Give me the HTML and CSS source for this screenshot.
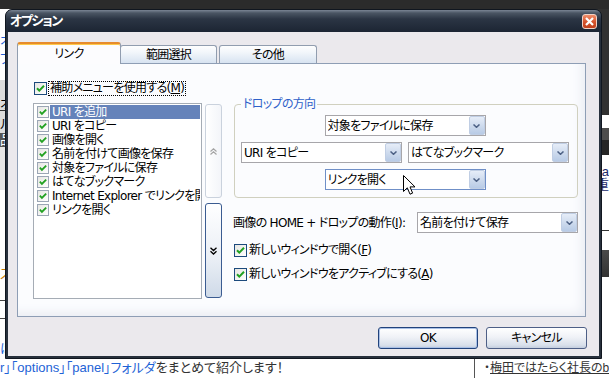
FILE: index.html
```html
<!DOCTYPE html>
<html>

<head>
    <meta charset="utf-8">
    <title>オプション</title>
    <link rel="stylesheet" href="styles.css">
</head>

<body>
    <svg width="0" height="0" class="defs">
        <symbol id="chk" viewBox="0 0 11 11">
            <polyline points="2,5.2 4.3,7.6 9,2.8" fill="none" stroke="#21a121" stroke-width="2"/>
        </symbol>
        <symbol id="drop" viewBox="0 0 7 4">
            <polyline points="0.5,0.5 3.5,3.3 6.5,0.5" fill="none" stroke="#4d6185" stroke-width="1.5"/>
        </symbol>
    </svg>

    <!-- page behind the dialog -->
    <div class="page">
        <div class="page-top"></div>
        <div class="page-body">
            <div class="page-main">
                <p class="m-link">オプションダイアログ</p>
                <p class="m-link">フォルダ構成</p>
                <div class="m-box">
                    <p class="m-text">オ</p>
                    <p class="m-text m-rule">ル</p>
                    <p class="m-dark">品</p>
                </div>
                <div class="m-pale"></div>
                <p class="m-note">ス</p>
                <div class="m-lines"></div>
                <p class="m-link m-low">はてな</p>
                <p class="lead"><span class="lead-hl">r」「options」「panel」フォルダ</span>をまとめて紹介します！</p>
            </div>
            <div class="page-side">
                <div class="s-dark"></div>
                <div class="s-gap"></div>
                <div class="s-head"></div>
                <div class="s-head2"></div>
                <div class="s-text">
                    <p>Hatena data</p>
                    <p>ブックマーク重</p>
                </div>
                <div class="s-gap2"></div>
                <div class="s-band"></div>
                <p class="s-link">・<u>梅田ではたらく社長のblog</u></p>
            </div>
        </div>
    </div>

    <!-- the dialog -->
    <div class="dialog">
        <div class="titlebar">
            <span class="title">オプション</span>
            <span class="close">
                <svg width="9" height="9" viewBox="0 0 9 9">
                    <path d="M1 1 L8 8 M8 1 L1 8" stroke="#fff" stroke-width="2.2"/>
                </svg>
            </span>
        </div>

        <div class="dlg-body">
            <div class="tabs">
                <div class="tab tab-on">リンク</div>
                <div class="tab tab-2">範囲選択</div>
                <div class="tab tab-3">その他</div>
            </div>

            <div class="panel">
                <div class="main-check">
                    <span class="box"><svg><use href="#chk"/></svg></span>
                    <span class="focus">補助メニューを使用する(<u>M</u>)</span>
                </div>

                <div class="cols">
                    <ul class="list">
                        <li class="item item-on"><span class="box box-s"><svg><use href="#chk"/></svg></span><span class="label">URI を追加</span></li>
                        <li class="item"><span class="box box-s"><svg><use href="#chk"/></svg></span><span class="label">URI をコピー</span></li>
                        <li class="item"><span class="box box-s"><svg><use href="#chk"/></svg></span><span class="label">画像を開く</span></li>
                        <li class="item"><span class="box box-s"><svg><use href="#chk"/></svg></span><span class="label">名前を付けて画像を保存</span></li>
                        <li class="item"><span class="box box-s"><svg><use href="#chk"/></svg></span><span class="label">対象をファイルに保存</span></li>
                        <li class="item"><span class="box box-s"><svg><use href="#chk"/></svg></span><span class="label">はてなブックマーク</span></li>
                        <li class="item"><span class="box box-s"><svg><use href="#chk"/></svg></span><span class="label">Internet Explorer でリンクを開く</span></li>
                        <li class="item"><span class="box box-s"><svg><use href="#chk"/></svg></span><span class="label">リンクを開く</span></li>
                    </ul>

                    <div class="scroll">
                        <div class="scroll-up">
                            <svg width="7" height="7" viewBox="0 0 7 7">
                                <path d="M0.5 3.5 L3.5 0.8 L6.5 3.5 M0.5 6.5 L3.5 3.8 L6.5 6.5" fill="none" stroke="#a4a4a4" stroke-width="1.2"/>
                            </svg>
                        </div>
                        <div class="scroll-down">
                            <svg width="7" height="8" viewBox="0 0 7 8">
                                <path d="M0.5 0.8 L3.5 3.6 L6.5 0.8 M0.5 4.3 L3.5 7.1 L6.5 4.3" fill="none" stroke="#000" stroke-width="1.3"/>
                            </svg>
                        </div>
                    </div>

                    <div class="side-col">
                        <fieldset class="group">
                            <legend>ドロップの方向</legend>
                            <div class="combo-row">
                                <div class="combo"><span class="combo-text">対象をファイルに保存</span><span class="combo-btn"><svg width="7" height="4"><use href="#drop"/></svg></span></div>
                            </div>
                            <div class="combo-row combo-split">
                                <div class="combo"><span class="combo-text">URI をコピー</span><span class="combo-btn"><svg width="7" height="4"><use href="#drop"/></svg></span></div>
                                <div class="combo"><span class="combo-text">はてなブックマーク</span><span class="combo-btn"><svg width="7" height="4"><use href="#drop"/></svg></span></div>
                            </div>
                            <div class="combo-row">
                                <div class="combo combo-hot"><span class="combo-text">リンクを開く</span><span class="combo-btn"><svg width="7" height="4"><use href="#drop"/></svg></span></div>
                            </div>
                        </fieldset>

                        <div class="action">
                            <span class="action-label">画像の HOME + ドロップの動作(<u>I</u>):</span>
                            <div class="combo"><span class="combo-text">名前を付けて保存</span><span class="combo-btn"><svg width="7" height="4"><use href="#drop"/></svg></span></div>
                        </div>

                        <div class="opt">
                            <span class="box"><svg><use href="#chk"/></svg></span>
                            <span class="opt-text">新しいウィンドウで開く(<u>F</u>)</span>
                        </div>
                        <div class="opt">
                            <span class="box"><svg><use href="#chk"/></svg></span>
                            <span class="opt-text">新しいウィンドウをアクティブにする(<u>A</u>)</span>
                        </div>
                    </div>
                </div>
            </div>

            <div class="actions">
                <button class="btn btn-default">OK</button>
                <button class="btn btn-cancel">キャンセル</button>
            </div>
        </div>
    </div>

    <svg class="cursor" width="13" height="21" viewBox="0 0 13 21">
        <path d="M0.5 0.5 L0.5 16.5 L4.3 12.8 L7 19.2 L9.6 18.1 L7 11.9 L12 11.9 Z" fill="#fff" stroke="#000" stroke-width="1"/>
    </svg>
</body>

</html>
```

FILE: styles.css
```css
* {
    box-sizing: border-box;
}

html, body {
    margin: 0;
    padding: 0;
}

body {
    position: relative;
    width: 609px;
    height: 378px;
    overflow: hidden;
    background: #fff;
    color: #000;
    font-family: "DejaVu Sans", "Noto Sans CJK JP", sans-serif;
    font-size: 12px;
    line-height: 14px;
    letter-spacing: -0.7px;
    font-feature-settings: "palt";
}

p {
    margin: 0;
}

.defs {
    position: absolute;
}

/* ---- background page ---- */

.page {
    display: flex;
    flex-direction: column;
    height: 378px;
    font-family: "Liberation Sans", "Noto Sans CJK JP", sans-serif;
    letter-spacing: 0;
}

.page-top {
    flex: none;
    height: 9px;
    background: #2b2b2b;
}

.page-body {
    flex: 1;
    display: flex;
    min-height: 0;
}

.page-main {
    width: 475px;
    display: flex;
    flex-direction: column;
    padding-top: 23px;
    border-right: 1px solid #555;
    font-size: 13px;
    white-space: nowrap;
    overflow: hidden;
}

.m-link {
    color: #1e5fd4;
    line-height: 18px;
}

.m-box {
    margin-top: 12px;
    height: 67px;
    padding-top: 17px;
    background: #dcdcdc;
}

.m-text {
    line-height: 13px;
}

.m-rule {
    border-top: 1px solid #333;
    padding-top: 6px;
}

.m-dark {
    margin-top: 3px;
    height: 14px;
    background: #555;
    color: #fff;
    line-height: 14px;
}

.m-pale {
    height: 43px;
    background: #e6e6e6;
}

.m-note {
    margin-top: 77px;
    color: #c77a00;
    line-height: 14px;
}

.m-lines {
    margin-top: 19px;
    height: 19px;
    border-top: 1px solid #444;
    border-bottom: 1px solid #444;
}

.m-low {
    margin-top: 21px;
}

.lead {
    margin-top: auto;
    line-height: 20px;
    color: #333;
}

.lead-hl {
    color: #1e63d6;
}

.page-side {
    flex: 1;
    display: flex;
    flex-direction: column;
    white-space: nowrap;
    overflow: hidden;
}

.s-dark {
    height: 106px;
    background: #313131;
}

.s-gap {
    height: 13px;
}

.s-head {
    height: 12px;
    background: #4d4d4d;
}

.s-head2 {
    height: 15px;
    background: #262626;
}

.s-text {
    height: 76px;
    padding-top: 10px;
    border-bottom: 1px solid #333;
    color: #1a2a6a;
    text-align: right;
    font-size: 13px;
    line-height: 13px;
}

.s-gap2 {
    height: 19px;
}

.s-band {
    height: 27px;
    background: linear-gradient(#4a4a4a, #333);
}

.s-link {
    margin-top: auto;
    padding-left: 9px;
    line-height: 20px;
    font-size: 12px;
    color: #333;
}

/* ---- dialog ---- */

.dialog {
    position: absolute;
    left: 5px;
    top: 9px;
    width: 597px;
    height: 350px;
    display: flex;
    flex-direction: column;
    padding: 0 2px 2px;
    background: #27303c;
    border: 1px solid #10161f;
    border-radius: 7px 7px 0 0;
}

.titlebar {
    flex: none;
    height: 22px;
    margin: 0 -2px;
    padding: 0 4px;
    display: flex;
    align-items: center;
    justify-content: space-between;
    background: linear-gradient(#7a8594, #4a5563 3px, #2b3544 9px, #1c2533);
    border-radius: 6px 6px 0 0;
}

.title {
    color: #fff;
    font-size: 13px;
    font-weight: bold;
    letter-spacing: -1.4px;
}

.close {
    width: 15px;
    height: 15px;
    display: flex;
    align-items: center;
    justify-content: center;
    border: 1px solid #f1d2c6;
    border-radius: 3px;
    background: linear-gradient(#f08f6c, #d6522b 55%, #c1401c);
}

.dlg-body {
    flex: 1;
    display: flex;
    flex-direction: column;
    padding: 10px 12px 7px 9px;
    background: #ebe9ed;
}

/* tabs */

.tabs {
    flex: none;
    height: 21px;
    display: flex;
    align-items: flex-end;
}

.tab {
    height: 18px;
    display: flex;
    align-items: center;
    justify-content: center;
    border: 1px solid #919daf;
    border-bottom: 0;
    border-radius: 3px 3px 0 0;
    background: linear-gradient(#fefefe, #f1f5fa 40%, #d7e3f1);
}

.tab-on {
    position: relative;
    z-index: 1;
    width: 104px;
    height: 22px;
    margin-bottom: -1px;
    border-top: 2px solid #e68b2c;
    box-shadow: inset 0 1px #ffc94a;
    background: #fcfcfe;
}

.tab-2 {
    width: 97px;
    margin-left: -1px;
}

.tab-3 {
    width: 98px;
    margin-left: 2px;
}

.panel {
    flex: none;
    height: 254px;
    margin-right: 1px;
    padding: 16px 8px 0 16px;
    border: 1px solid #8e9eb5;
    background: #fbfcfe;
    box-shadow: inset -10px -10px 12px -8px #e6e9f1;
}

/* checkboxes */

.box {
    flex: none;
    width: 13px;
    height: 13px;
    display: flex;
    border: 1px solid #1c4a7c;
    background: linear-gradient(135deg, #e6e6e2, #fff);
}

.box svg {
    width: 11px;
    height: 11px;
}

.box-s {
    width: 12px;
    height: 12px;
    border-color: #9ba6b5;
}

.box-s svg {
    width: 10px;
    height: 10px;
}

.main-check {
    height: 17px;
    display: flex;
    align-items: center;
}

.focus {
    margin-left: 1px;
    padding: 0 1px;
    border: 1px dotted #000;
    line-height: 13px;
}

.cols {
    display: flex;
    align-items: flex-start;
    margin-top: 6px;
}

/* list */

.list {
    flex: none;
    width: 169px;
    height: 196px;
    margin: 0 0 0 -1px;
    padding: 1px 1px 0 3px;
    list-style: none;
    border: 1px solid #a5acb5;
    background: #fff;
}

.item {
    height: 14px;
    display: flex;
    align-items: center;
}

.label {
    flex: 1;
    height: 14px;
    margin-left: 1px;
    padding: 0 2px;
    white-space: nowrap;
    overflow: hidden;
}

.item-on .label {
    background: #6583ba;
    color: #fff;
}

.scroll {
    flex: none;
    width: 17px;
    margin-left: 3px;
    display: flex;
    flex-direction: column;
}

.scroll-up,
.scroll-down {
    display: flex;
    align-items: center;
    justify-content: center;
    border-radius: 3px;
}

.scroll-up {
    height: 94px;
    margin-top: 1px;
    border: 1px solid #cad2dd;
    background: linear-gradient(to right, #fff, #f3f5f9);
}

.scroll-down {
    height: 95px;
    margin-top: 5px;
    border: 1px solid #3b5c91;
    background: linear-gradient(#ffffff, #e9eef5 60%, #cfdae8);
}

/* right column */

.side-col {
    flex: none;
    width: 344px;
    margin: -6px 0 0 12px;
}

.group {
    margin: 0;
    min-width: 0;
    padding: 4px 8px 7px 6px;
    border: 1px solid #d0d0bf;
    border-radius: 4px;
}

.group legend {
    padding: 0 2px;
    color: #2f61c9;
    line-height: 14px;
}

.combo-row {
    display: flex;
    justify-content: center;
}

.combo-row + .combo-row {
    margin-top: 6px;
}

.combo-split {
    justify-content: space-between;
}

.combo {
    flex: none;
    width: 161px;
    height: 21px;
    display: flex;
    align-items: center;
    padding-left: 2px;
    border: 1px solid #a7a6aa;
    background: #fff;
}

.combo-hot {
    border-color: #6f8fc7;
}

.combo-text {
    flex: 1;
    white-space: nowrap;
    overflow: hidden;
}

.combo-btn {
    flex: none;
    width: 16px;
    height: 19px;
    display: flex;
    align-items: center;
    justify-content: center;
    border: 1px solid #c0cee4;
    border-radius: 2px;
    background: linear-gradient(#e6edf8, #cad8ec 60%, #b8cbe6);
}

.action {
    height: 21px;
    margin-top: 14px;
    display: flex;
    align-items: center;
    justify-content: space-between;
}

.action-label {
    margin-left: -1px;
}

.opt {
    height: 14px;
    margin-top: 10px;
    display: flex;
    align-items: center;
}

.opt-text {
    margin-left: 2px;
}

/* buttons */

.actions {
    display: flex;
    justify-content: flex-end;
    gap: 8px;
    margin-top: 10px;
}

.btn {
    height: 22px;
    padding: 0;
    border-radius: 3px;
    font: inherit;
    letter-spacing: inherit;
    color: #000;
    background: linear-gradient(#ffffff, #f0f2f7 45%, #d9e0eb 85%, #c4cede);
}

.btn-default {
    width: 100px;
    border: 1px solid #22437c;
    box-shadow: inset 0 0 0 1px #a9c0e6;
}

.btn-cancel {
    width: 101px;
    border: 1px solid #4e5f86;
}

.cursor {
    position: absolute;
    left: 403px;
    top: 175px;
}
```
